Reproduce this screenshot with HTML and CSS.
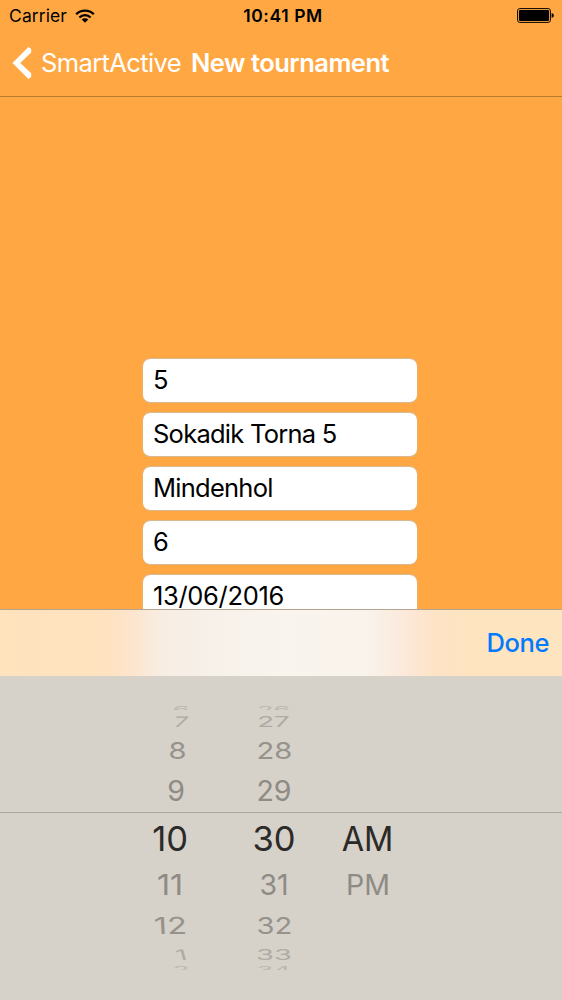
FILE: index.html
```
<!DOCTYPE html>
<html lang="en">
<head>
<meta charset="utf-8">
<title>New tournament</title>
<link rel="stylesheet" href="styles.css">
</head>
<body>
<div class="screen">
  <header class="header">
    <div class="status">
      <div class="carrier"><span class="carrier-name">Carrier</span>
        <svg class="wifi" width="20" height="14" viewBox="0 0 20 14" fill="none" stroke="#000" stroke-width="2.3"><path d="M1.2 5.2a12.4 12.4 0 0 1 17.6 0"/><path d="M4.4 8.5a7.9 7.9 0 0 1 11.2 0"/><path d="M6.7 10.6a4.6 4.6 0 0 1 6.6 0L10 13.8z" fill="#000" stroke="none"/></svg>
      </div>
      <div class="clock">10:41 PM</div>
      <svg class="battery" width="38" height="16" viewBox="0 0 38 16"><rect x=".6" y=".6" width="32.8" height="13.8" rx="2.2" fill="none" stroke="#000" stroke-width="1"/><rect x="2" y="2" width="30" height="11" rx="1" fill="#000"/><path d="M34.6 5.2c1.6.3 2.2 1.2 2.2 2.3s-.6 2-2.2 2.3z" fill="#000"/></svg>
    </div>
    <nav class="nav">
      <svg class="chevron" width="20" height="34" viewBox="0 0 20 34"><path d="M16.4 1 .5 17l15.9 16 2.8-2V27.2L8.2 17l11-10.4V3z" fill="#fff"/></svg>
      <span class="back">SmartActive</span>
      <h1 class="title">New tournament</h1>
    </nav>
  </header>
  <main class="form">
    <div class="field">5</div>
    <div class="field name">Sokadik Torna 5</div>
    <div class="field place">Mindenhol</div>
    <div class="field">6</div>
    <div class="field date">13/06/2016</div>
  </main>
  <div class="toolbar"><span class="done">Done</span></div>
  <section class="picker">
    <div class="row edge top"><span class="hour">6</span><span class="minute">26</span></div>
    <div class="row far up"><span class="hour">7</span><span class="minute">27</span></div>
    <div class="row mid up"><span class="hour">8</span><span class="minute">28</span></div>
    <div class="row near up"><span class="hour">9</span><span class="minute">29</span></div>
    <div class="row selected"><span class="hour">10</span><span class="minute">30</span><span class="period">AM</span></div>
    <div class="row near down"><span class="hour">11</span><span class="minute">31</span><span class="period">PM</span></div>
    <div class="row mid down"><span class="hour">12</span><span class="minute">32</span></div>
    <div class="row far down"><span class="hour">1</span><span class="minute">33</span></div>
    <div class="row edge bottom"><span class="hour">2</span><span class="minute">34</span></div>
    <div class="marker"></div>
  </section>
</div>
</body>
</html>
```
FILE: styles.css
```
* { box-sizing: border-box; }
body { margin: 0; font-family: Inter, "Liberation Sans", sans-serif; }
.screen { width: 562px; height: 1000px; overflow: hidden; display: flex; flex-direction: column; background: #ffa843; color: #000; }

.header { height: 97px; flex: none; border-bottom: 1px solid #b87b34; }
.status { height: 31px; display: grid; grid-template-columns: 1fr auto 1fr; align-items: center; padding: 0 7px 0 9px; font-size: 17.5px; }
.carrier { display: flex; align-items: center; gap: 8px; }
.carrier-name { letter-spacing: 0.1px; }
.clock { font-weight: 600; font-size: 17.5px; letter-spacing: 0.6px; padding-left: 2px; }
.battery { justify-self: end; }
.nav { height: 64px; display: flex; align-items: center; padding-left: 12px; color: #fff; font-size: 25.5px; line-height: 30px; white-space: nowrap; }
.back { margin-left: 9px; width: 150px; letter-spacing: -0.62px; }
.title { margin: 0; font-size: 25.5px; font-weight: 600; letter-spacing: -0.5px; }

.form { height: 512px; flex: none; overflow: hidden; padding: 261px 0 0 142px; display: flex; flex-direction: column; gap: 9px; }
.field { width: 276px; height: 45px; flex: none; padding-left: 10px; border-radius: 8px; background: #fff; background-clip: padding-box; border: 1px solid rgba(205, 190, 170, 0.75); border-left-color: rgba(205, 190, 170, 0.3); border-right-color: rgba(205, 190, 170, 0.3); font-size: 25.5px; line-height: 42px; white-space: nowrap; }
.name, .place { letter-spacing: -0.75px; }
.date { letter-spacing: -0.32px; }

.toolbar { height: 67px; flex: none; border-top: 1px solid #b7a48f; background: linear-gradient(90deg, #ffe3bd 0, #ffe2bf 105px, #fde5cd 132px, #f8ede2 160px, #f6f0e9 205px, #f9f4ed 280px, #f9f3ec 365px, #fbeadd 400px, #fee3c6 435px, #ffe4c0 470px, #ffe4c0 562px); display: flex; align-items: center; justify-content: flex-end; padding: 0 13px 1px 0; }
.done { color: #007aff; font-size: 25.5px; font-weight: 500; letter-spacing: -0.4px; }

.picker { position: relative; flex: 1; padding-top: 29px; background: #d6d1c9; }
.marker { position: absolute; top: 136px; left: 0; right: 0; height: 1px; background: #aaa7a1; }
.row { display: grid; grid-template-columns: 187px 174px 12px; align-items: center; line-height: 1; color: #8e8b85; white-space: nowrap; }
.hour { justify-self: end; transform-origin: right; }
.minute { justify-self: center; }
.period { justify-self: center; }
.selected { height: 49px; font-size: 34.5px; color: #2b2a28; padding-top: 1px; }
.selected .hour { margin-right: -1px; }
.selected .period { transform: scaleX(0.94); }
.near { height: 46px; font-size: 28.5px; }
.near.up { padding-top: 1px; }
.near .hour { margin-right: 2px; }
.near.down { height: 44px; padding-top: 1px; }
.near.down .hour { margin-right: 4px; transform: scaleX(1.13); }
.near.down .period { transform: translateX(1px); }
.mid { height: 35px; font-size: 23.5px; color: #96928c; }
.mid.down { height: 37px; }
.mid span { transform: scaleX(1.24); }
.mid.down .hour { transform: scaleX(1.38) skewX(2deg); }
.far { height: 23px; font-size: 14.5px; color: #afaba4; padding-top: 1px; }
.far.down { height: 21px; padding-top: 2px; }
.far span { transform: scaleX(1.9); }
.far.up .hour { margin-right: -1px; transform: scaleX(1.75) skewX(-6deg); }
.far.down .hour { transform: scaleX(1.9) skewX(8deg); }
.far.down .minute { transform: scaleX(2); }
.edge { height: 5px; font-size: 9px; color: #bbb7b0; overflow: hidden; }
.edge span { transform: scaleX(3); }
.edge.top { align-items: end; }
.edge.top .hour { margin-right: -3px; }
.edge.bottom { align-items: start; }
.edge.bottom .hour { margin-right: -2px; }
```
